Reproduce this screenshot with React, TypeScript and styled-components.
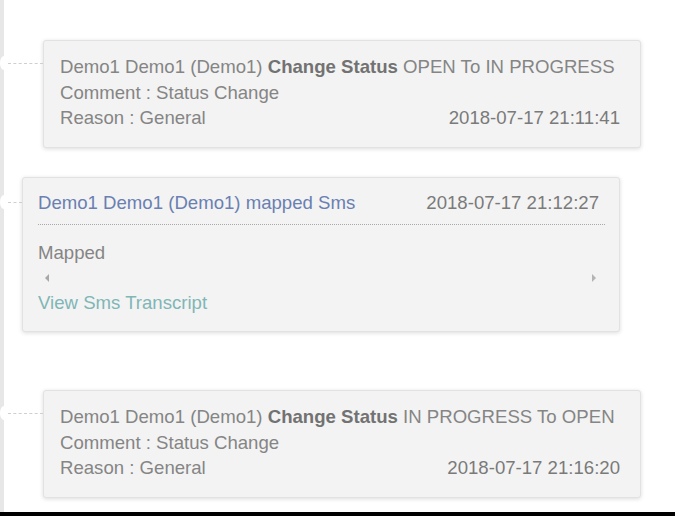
import React from "react"
import styled, {createGlobalStyle} from "styled-components"

const GlobalStyle = createGlobalStyle`
  html, body {
    margin: 0;
    padding: 0;
    background: #ffffff;
  }
  body {
    font-family: "Liberation Sans", Arial, sans-serif;
  }
`

const Page = styled.div`
  width: 675px;
  height: 516px;
  display: flex;
  flex-direction: column;
  overflow: hidden;
`

const Timeline = styled.div`
  flex: 1;
  border-left: 4px solid #e7e7e7;
  padding-top: 40px;
  display: flex;
  flex-direction: column;
`

type EntryProps = {$indent: number; $top: number; $link: number}

const Entry = styled.div<EntryProps>`
  position: relative;
  margin-left: ${(p) => p.$indent}px;
  margin-top: ${(p) => p.$top}px;
  width: 598px;

  /* dashed connector from the timeline rail to the card */
  &:before {
    content: "";
    position: absolute;
    top: ${(p) => p.$link}px;
    left: ${(p) => -p.$indent + 4}px;
    width: ${(p) => p.$indent - 4}px;
    border-top: 1px dashed #cfcfcf;
  }

  /* break in the rail where the connector leaves it */
  &:after {
    content: "";
    position: absolute;
    top: ${(p) => p.$link - 7}px;
    left: ${(p) => -p.$indent - 4}px;
    width: 8px;
    height: 14px;
    border-radius: 50%;
    background: #ffffff;
  }
`

const Card = styled.div`
  background: #f3f3f3;
  border: 1px solid #e2e2e2;
  border-radius: 3px;
  box-shadow: 0 1px 4px rgba(0, 0, 0, 0.14);
  font-size: 18.6px;
  line-height: 25.5px;
  color: #858585;
`

const StatusCard = styled(Card)`
  padding: 13px 20px 16px 16px;
`

const Strong = styled.b`
  color: #727272;
  font-weight: bold;
`

const Row = styled.div`
  display: flex;
  justify-content: space-between;
  white-space: nowrap;
`

const Stamp = styled.span`
  color: #7a7a7a;
`

const SmsCard = styled(Card)`
  padding: 12px 20px 16px 15px;
`

const SmsHeader = styled(Row)`
  padding-bottom: 9px;
  border-bottom: 1px dotted #a9a9a9;
  margin-bottom: 15px;
  margin-right: -6px;
  padding-right: 6px;
`

const SmsTitle = styled.span`
  color: #6a7fb2;
`

const Scroller = styled.div`
  display: flex;
  justify-content: space-between;
  align-items: center;
  height: 24px;
  padding: 0 3px 0 7px;
`

type ArrowProps = {$dir: "left" | "right"}

const Arrow = styled.span<ArrowProps>`
  width: 0;
  height: 0;
  border-top: 4px solid transparent;
  border-bottom: 4px solid transparent;
  ${(p) =>
    p.$dir === "left"
      ? "border-right: 4px solid #a8a8a8;"
      : "border-left: 4px solid #b4b4b4;"}
`

const TranscriptLink = styled.a`
  color: #80b6b6;
  text-decoration: none;
  cursor: pointer;
`

const BottomBar = styled.div`
  height: 4px;
  background: #000000;
`

type Status = {from: string; to: string; stamp: string}

const statusEntries: Status[] = [
  {from: "OPEN", to: "IN PROGRESS", stamp: "2018-07-17 21:11:41"},
  {from: "IN PROGRESS", to: "OPEN", stamp: "2018-07-17 21:16:20"},
]

function StatusEntry({entry, top}: {entry: Status; top: number}) {
  return (
    <Entry $indent={39} $top={top} $link={23}>
      <StatusCard>
        <Row>
          <span>
            Demo1 Demo1 (Demo1) <Strong>Change Status</Strong> {entry.from} To{" "}
            {entry.to}
          </span>
        </Row>
        <div>Comment : Status Change</div>
        <Row>
          <span>Reason : General</span>
          <Stamp>{entry.stamp}</Stamp>
        </Row>
      </StatusCard>
    </Entry>
  )
}

export default function App() {
  return (
    <Page>
      <GlobalStyle />
      <Timeline>
        <StatusEntry entry={statusEntries[0]} top={0} />
        <Entry $indent={18} $top={29} $link={25}>
          <SmsCard>
            <SmsHeader>
              <SmsTitle>Demo1 Demo1 (Demo1) mapped Sms</SmsTitle>
              <Stamp>2018-07-17 21:12:27</Stamp>
            </SmsHeader>
            <div>Mapped</div>
            <Scroller>
              <Arrow $dir="left" />
              <Arrow $dir="right" />
            </Scroller>
            <TranscriptLink>View Sms Transcript</TranscriptLink>
          </SmsCard>
        </Entry>
        <StatusEntry entry={statusEntries[1]} top={58} />
      </Timeline>
      <BottomBar />
    </Page>
  )
}
